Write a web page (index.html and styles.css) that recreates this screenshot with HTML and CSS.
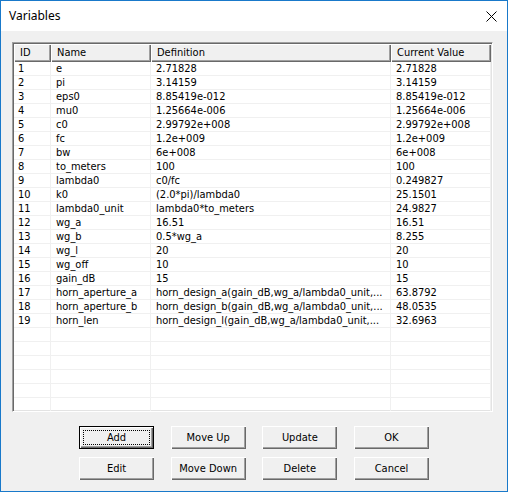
FILE: index.html
```html
<!DOCTYPE html>
<html>
<head>
<meta charset="utf-8">
<link rel="stylesheet" href="styles.css">
</head>
<body>
<div class="window">
  <div class="titlebar">
    <span class="title">Variables</span>
    <svg class="close" width="11" height="11" viewBox="0 0 11 11"><path d="M0.5 0.5 L10.5 10.5 M10.5 0.5 L0.5 10.5" stroke="#000" stroke-width="1" fill="none"/></svg>
  </div>
  <div class="content">
    <div class="list">
      <table class="grid">
        <colgroup><col class="c-id"><col class="c-name"><col class="c-def"><col class="c-val"></colgroup>
        <thead>
          <tr><th>ID</th><th>Name</th><th>Definition</th><th>Current Value</th></tr>
        </thead>
        <tbody>
          <tr><td>1</td><td>e</td><td>2.71828</td><td>2.71828</td></tr>
          <tr><td>2</td><td>pi</td><td>3.14159</td><td>3.14159</td></tr>
          <tr><td>3</td><td>eps0</td><td>8.85419e-012</td><td>8.85419e-012</td></tr>
          <tr><td>4</td><td>mu0</td><td>1.25664e-006</td><td>1.25664e-006</td></tr>
          <tr><td>5</td><td>c0</td><td>2.99792e+008</td><td>2.99792e+008</td></tr>
          <tr><td>6</td><td>fc</td><td>1.2e+009</td><td>1.2e+009</td></tr>
          <tr><td>7</td><td>bw</td><td>6e+008</td><td>6e+008</td></tr>
          <tr><td>8</td><td>to_meters</td><td>100</td><td>100</td></tr>
          <tr><td>9</td><td>lambda0</td><td>c0/fc</td><td>0.249827</td></tr>
          <tr><td>10</td><td>k0</td><td>(2.0*pi)/lambda0</td><td>25.1501</td></tr>
          <tr><td>11</td><td>lambda0_unit</td><td>lambda0*to_meters</td><td>24.9827</td></tr>
          <tr><td>12</td><td>wg_a</td><td>16.51</td><td>16.51</td></tr>
          <tr><td>13</td><td>wg_b</td><td>0.5*wg_a</td><td>8.255</td></tr>
          <tr><td>14</td><td>wg_l</td><td>20</td><td>20</td></tr>
          <tr><td>15</td><td>wg_off</td><td>10</td><td>10</td></tr>
          <tr><td>16</td><td>gain_dB</td><td>15</td><td>15</td></tr>
          <tr><td>17</td><td>horn_aperture_a</td><td>horn_design_a(gain_dB,wg_a/lambda0_unit,...</td><td>63.8792</td></tr>
          <tr><td>18</td><td>horn_aperture_b</td><td>horn_design_b(gain_dB,wg_a/lambda0_unit,...</td><td>48.0535</td></tr>
          <tr><td>19</td><td>horn_len</td><td>horn_design_l(gain_dB,wg_a/lambda0_unit,...</td><td>32.6963</td></tr>
          <tr><td></td><td></td><td></td><td></td></tr>
          <tr><td></td><td></td><td></td><td></td></tr>
          <tr><td></td><td></td><td></td><td></td></tr>
          <tr><td></td><td></td><td></td><td></td></tr>
          <tr><td></td><td></td><td></td><td></td></tr>
          <tr><td></td><td></td><td></td><td></td></tr>
        </tbody>
      </table>
    </div>
    <div class="buttons">
      <button class="btn default"><span class="focus">Add</span></button>
      <button class="btn"><span>Move Up</span></button>
      <button class="btn"><span>Update</span></button>
      <button class="btn"><span>OK</span></button>
      <button class="btn"><span>Edit</span></button>
      <button class="btn"><span>Move Down</span></button>
      <button class="btn"><span>Delete</span></button>
      <button class="btn"><span>Cancel</span></button>
    </div>
  </div>
</div>
</body>
</html>
```
FILE: styles.css
```css
html, body {
  margin: 0;
  padding: 0;
  background: #f0f0f0;
}
.window {
  width: 508px;
  height: 492px;
  box-sizing: border-box;
  border: 1px solid #1979ca;
  background: #f0f0f0;
  display: flex;
  flex-direction: column;
  overflow: hidden;
}
.titlebar {
  height: 30px;
  background: #ffffff;
  display: flex;
  align-items: center;
  justify-content: space-between;
  padding: 0 10px 0 8px;
  flex: none;
}
.title {
  font-family: "Noto Sans", "Open Sans", sans-serif;
  font-size: 12px;
  color: #000;
  margin-top: -1px;
}
.close {
  display: block;
  margin-top: 0px;
}
.content {
  flex: 1;
  display: flex;
  flex-direction: column;
  padding: 11px 14px 0 11px;
}
.list {
  width: 481px;
  height: 370px;
  box-sizing: border-box;
  background: #fff;
  border-top: 1px solid #a0a0a0;
  border-left: 1px solid #a0a0a0;
  border-right: 1px solid #fff;
  border-bottom: 1px solid #fff;
  box-shadow: inset 1px 1px 0 #696969, inset -1px -1px 0 #e3e3e3;
  padding: 1px;
  overflow: hidden;
}
.grid {
  table-layout: fixed;
  border-collapse: separate;
  border-spacing: 0;
  width: 477px;
  font-family: "DejaVu Sans Condensed", "DejaVu Sans", sans-serif;
  font-size: 11px;
  color: #000;
}
.c-id { width: 37px; }
.c-name { width: 100px; }
.c-def { width: 240px; }
.c-val { width: 100px; }
.grid th {
  height: 18px;
  padding: 0 0 0 6px;
  text-align: left;
  font-weight: normal;
  background: #f0f0f0;
  box-sizing: border-box;
  box-shadow: inset 1px 1px 0 #fff, inset -1px -1px 0 #696969, inset -2px -2px 0 #a0a0a0;
  white-space: nowrap;
  overflow: hidden;
  line-height: 16px;
}
.grid td {
  height: 14px;
  box-sizing: border-box;
  padding: 0 0 0 5px;
  border-right: 1px solid #f0f0f0;
  border-bottom: 1px solid #f0f0f0;
  white-space: nowrap;
  overflow: hidden;
  line-height: 13px;
}
.grid td:first-child {
  padding-left: 4px;
}
.buttons {
  margin-top: 14px;
  margin-left: 67px;
  display: grid;
  grid-template-columns: repeat(4, 75px);
  column-gap: 16.67px;
  row-gap: 8px;
}
.btn {
  width: 75px;
  height: 23px;
  box-sizing: border-box;
  margin: 0;
  padding: 0;
  background: #f0f0f0;
  border: none;
  border-radius: 0;
  font-family: "DejaVu Sans Condensed", "DejaVu Sans", sans-serif;
  font-size: 11px;
  color: #000;
  box-shadow: inset 1px 1px 0 #fff, inset -1px -1px 0 #696969, inset -2px -2px 0 #a0a0a0;
  display: flex;
  align-items: center;
  justify-content: center;
}
.btn.default {
  box-shadow: inset 0 0 0 1px #000, inset 2px 2px 0 #fff, inset -2px -2px 0 #696969, inset -3px -3px 0 #a0a0a0;
  padding: 4px;
}
.btn .focus {
  flex: 1;
  align-self: stretch;
  display: flex;
  align-items: center;
  justify-content: center;
  outline: 1px dotted #000;
  outline-offset: -1px;
}
```
